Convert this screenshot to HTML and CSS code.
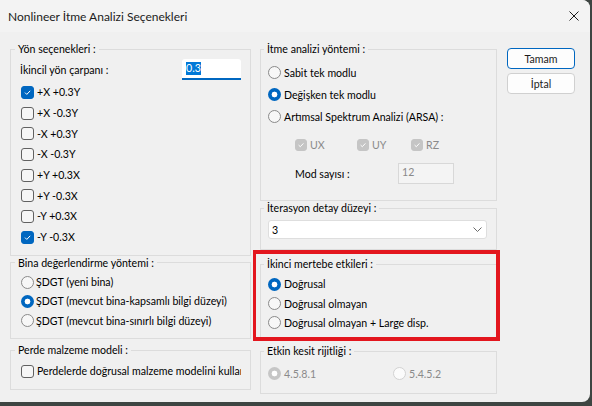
FILE: index.html
```html
<!DOCTYPE html>
<html lang="tr">
<head>
    <meta charset="UTF-8">
    <title>Nonlineer İtme Analizi Seçenekleri</title>
    <link rel="stylesheet" href="styles.css">
</head>
<body>
<div class="dialog">
    <div class="titlebar">
        <span class="title">Nonlineer İtme Analizi Seçenekleri</span>
        <span class="close">
            <svg width="10" height="10" viewBox="0 0 10 10"><path d="M0.5 0.5L9.5 9.5M9.5 0.5L0.5 9.5" stroke="#1b1b1b" stroke-width="1" fill="none"/></svg>
        </span>
    </div>
    <div class="content">
        <div class="column left">
            <fieldset class="group yon">
                <legend>Yön seçenekleri :</legend>
                <div class="factor-row">
                    <span>İkincil yön çarpanı :</span>
                    <span class="textbox"><span class="selected">0.3</span></span>
                </div>
                <div class="option dir"><span class="check on"><svg width="11" height="11" viewBox="0 0 11 11"><path d="M3 5.6L4.8 7.4L8.2 3.8" stroke="#fff" stroke-width="1" fill="none"/></svg></span>+X +0.3Y</div>
                <div class="option dir"><span class="check"></span>+X -0.3Y</div>
                <div class="option dir"><span class="check"></span>-X +0.3Y</div>
                <div class="option dir"><span class="check"></span>-X -0.3Y</div>
                <div class="option dir"><span class="check"></span>+Y +0.3X</div>
                <div class="option dir"><span class="check"></span>+Y -0.3X</div>
                <div class="option dir"><span class="check"></span>-Y +0.3X</div>
                <div class="option dir"><span class="check on"><svg width="11" height="11" viewBox="0 0 11 11"><path d="M3 5.6L4.8 7.4L8.2 3.8" stroke="#fff" stroke-width="1" fill="none"/></svg></span>-Y -0.3X</div>
            </fieldset>

            <fieldset class="group bina">
                <legend>Bina değerlendirme yöntemi :</legend>
                <div class="option tight"><span class="radio"></span>ŞDGT (yeni bina)</div>
                <div class="option tight"><span class="radio on"></span>ŞDGT (mevcut bina-kapsamlı bilgi düzeyi)</div>
                <div class="option tight"><span class="radio"></span>ŞDGT (mevcut bina-sınırlı bilgi düzeyi)</div>
            </fieldset>

            <fieldset class="group perde">
                <legend>Perde malzeme modeli :</legend>
                <div class="option single"><span class="check"></span><span class="clip">Perdelerde doğrusal malzeme modelini kullan</span></div>
            </fieldset>
        </div>

        <div class="column right">
            <fieldset class="group itme">
                <legend>İtme analizi yöntemi :</legend>
                <div class="option wide"><span class="radio"></span>Sabit tek modlu</div>
                <div class="option wide"><span class="radio on"></span>Değişken tek modlu</div>
                <div class="option wide"><span class="radio"></span>Artımsal Spektrum Analizi (ARSA) :</div>
                <div class="axis-row">
                    <div class="axis ux"><span class="check small off on"><svg width="10" height="10" viewBox="0 0 10 10"><path d="M2.6 5.1L4.3 6.7L7.4 3.4" stroke="#fff" stroke-width="1" fill="none"/></svg></span>UX</div>
                    <div class="axis uy"><span class="check small off on"><svg width="10" height="10" viewBox="0 0 10 10"><path d="M2.6 5.1L4.3 6.7L7.4 3.4" stroke="#fff" stroke-width="1" fill="none"/></svg></span>UY</div>
                    <div class="axis"><span class="check small off on"><svg width="10" height="10" viewBox="0 0 10 10"><path d="M2.6 5.1L4.3 6.7L7.4 3.4" stroke="#fff" stroke-width="1" fill="none"/></svg></span>RZ</div>
                </div>
                <div class="mod-row">
                    <span class="mod-label">Mod sayısı :</span>
                    <span class="numbox">12</span>
                </div>
            </fieldset>

            <fieldset class="group iter">
                <legend>İterasyon detay düzeyi :</legend>
                <div class="combo">
                    <span>3</span>
                    <svg width="9" height="5" viewBox="0 0 9 5"><path d="M0.5 0.5L4.5 4.5L8.5 0.5" stroke="#6b6b6b" stroke-width="1" fill="none"/></svg>
                </div>
            </fieldset>

            <fieldset class="group ikinci">
                <legend>İkinci mertebe etkileri :</legend>
                <div class="option tight"><span class="radio on"></span>Doğrusal</div>
                <div class="option tight"><span class="radio"></span>Doğrusal olmayan</div>
                <div class="option tight"><span class="radio"></span>Doğrusal olmayan + Large disp.</div>
            </fieldset>

            <fieldset class="group etkin">
                <legend>Etkin kesit rijitliği :</legend>
                <div class="option single disabled">
                    <span class="stiff"><span class="radio off on"></span>4.5.8.1</span>
                    <span class="stiff"><span class="radio off"></span>5.4.5.2</span>
                </div>
            </fieldset>
        </div>

        <div class="buttons">
            <div class="button default">Tamam</div>
            <div class="button">İptal</div>
        </div>
    </div>
    <div class="highlight"></div>
</div>
</body>
</html>
```

FILE: styles.css
```css
body{
    margin: 0;
    background-color: #3e4542;
    font-family: Lato, "Noto Sans", sans-serif;
    font-size: 10.6px;
    color: #000000;
}
.dialog{
    position: relative;
    width: 590px;
    height: 402px;
    background-color: #f0f0f0;
    border-radius: 0 8px 8px 0;
    display: flex;
    flex-direction: column;
    overflow: hidden;
}
.titlebar{
    height: 32px;
    display: flex;
    align-items: center;
    padding-left: 8px;
    background-color: #f3f3f3;
    box-sizing: border-box;
    flex: none;
}
.title{
    font-size: 12px;
    color: #1b1b1b;
}
.close{
    margin-left: auto;
    margin-right: 11px;
    display: flex;
}
.content{
    display: grid;
    grid-template-columns: 241px 237px 69px;
    column-gap: 9px;
    padding: 10px 0 0 10px;
    align-items: start;
}
.content .buttons{
    margin-left: 1px;
}
.column{
    display: flex;
    flex-direction: column;
}
.group{
    margin: 0;
    border: 1px solid #dcdcdc;
    min-width: 0;
    box-sizing: border-box;
    flex: none;
}
.group legend{
    padding: 0 3px;
    line-height: 14px;
}
.left .group{
    padding-left: 10px;
    padding-right: 9px;
}
.left legend{
    margin-left: -6px;
}
.right .group{
    padding-left: 7px;
    padding-right: 8px;
}
.right legend{
    margin-left: -4px;
}
.option{
    display: flex;
    align-items: center;
    white-space: nowrap;
}
.option.dir{
    height: 20.7px;
}
.option.tight{
    height: 19.3px;
}
.option.wide{
    height: 22.2px;
}
.option.single{
    height: 20px;
}
.check{
    width: 13px;
    height: 13px;
    box-sizing: border-box;
    border: 1px solid #616161;
    border-radius: 3px;
    background-color: #f6f6f6;
    margin-right: 3px;
    flex: none;
    display: flex;
    align-items: center;
    justify-content: center;
}
.check.on{
    background-color: #0067c0;
    border-color: #0067c0;
}
.check.small{
    width: 12px;
    height: 12px;
}
.check.off.on{
    background-color: #c5c5c5;
    border-color: #c5c5c5;
}
.radio{
    width: 13px;
    height: 13px;
    box-sizing: border-box;
    border: 1px solid #8a8a8a;
    border-radius: 50%;
    background-color: #f7f7f7;
    margin-right: 2px;
    flex: none;
}
.right .radio{
    margin-right: 3px;
}
.radio.on{
    border: none;
    background: radial-gradient(circle, #ffffff 0 2.6px, #0067c0 3.2px);
}
.radio.off{
    border-color: #d2d2d2;
    background-color: #fbfbfb;
}
.radio.off.on{
    border: none;
    background: radial-gradient(circle, #ffffff 0 2.6px, #c6c6c6 3.2px);
}

/* Yön seçenekleri */
.yon{
    padding-top: 0;
    padding-bottom: 7px;
}
.factor-row{
    display: flex;
    align-items: center;
    justify-content: space-between;
    margin-top: 3px;
    margin-bottom: 2px;
}
.factor-row > span:first-child{
    margin-left: -1px;
}
.textbox{
    width: 59px;
    height: 21px;
    box-sizing: border-box;
    background-color: #ffffff;
    border-bottom: 2px solid #0067c0;
    border-radius: 3px 3px 0 0;
    padding: 3px 0 0 4px;
}
.selected{
    display: inline-block;
    background-color: #0078d7;
    color: #ffffff;
    line-height: 13px;
}

.bina{
    padding-top: 3px;
    padding-bottom: 8px;
}
.perde{
    margin-top: 4px;
    padding-top: 4px;
    padding-bottom: 8px;
}
.clip{
    overflow: hidden;
    width: 205px;
}

/* right column */
.itme{
    padding-top: 5.5px;
    padding-bottom: 16px;
}
.axis-row{
    display: flex;
    align-items: center;
    height: 21px;
    margin-top: 6px;
    margin-left: 27px;
    color: #8a8a8a;
}
.axis{
    display: flex;
    align-items: center;
}
.axis.ux{
    width: 62px;
}
.axis.uy{
    width: 54px;
}
.mod-row{
    display: flex;
    align-items: center;
    margin-top: 8px;
    margin-left: 27px;
}
.mod-label{
    width: 103px;
}
.numbox{
    width: 56px;
    height: 21px;
    box-sizing: border-box;
    border: 1px solid #d8d8d8;
    background-color: #f4f4f4;
    color: #8a8a8a;
    padding: 0 0 0 3px;
    line-height: 16px;
}
.iter{
    padding-top: 5px;
    padding-bottom: 10px;
}
.combo{
    height: 19px;
    box-sizing: border-box;
    background-color: #ffffff;
    border: 1px solid #dedede;
    border-radius: 3px;
    display: flex;
    align-items: center;
    justify-content: space-between;
    padding: 0 4px 0 3px;
    margin-right: 1px;
}
.ikinci{
    margin-top: 7px;
    padding-top: 3.5px;
    padding-bottom: 7px;
}
.etkin{
    margin-top: 4px;
    padding-top: 5.5px;
    padding-bottom: 9px;
}
.disabled{
    color: #8a8a8a;
}
.stiff{
    display: flex;
    align-items: center;
    width: 125px;
    flex: none;
}

/* buttons */
.buttons{
    display: flex;
    flex-direction: column;
    gap: 4px;
    margin-top: 6px;
}
.button{
    height: 21px;
    box-sizing: border-box;
    border: 1px solid #d0d0d0;
    border-radius: 4px;
    background-color: #fdfdfd;
    display: flex;
    align-items: center;
    justify-content: center;
    color: #1b1b1b;
}
.button.default{
    border-color: #0067c0;
}

/* annotation */
.highlight{
    position: absolute;
    left: 253px;
    top: 250px;
    width: 247px;
    height: 91px;
    box-sizing: border-box;
    border: 4px solid #e3161e;
    border-left-width: 3px;
}
```
